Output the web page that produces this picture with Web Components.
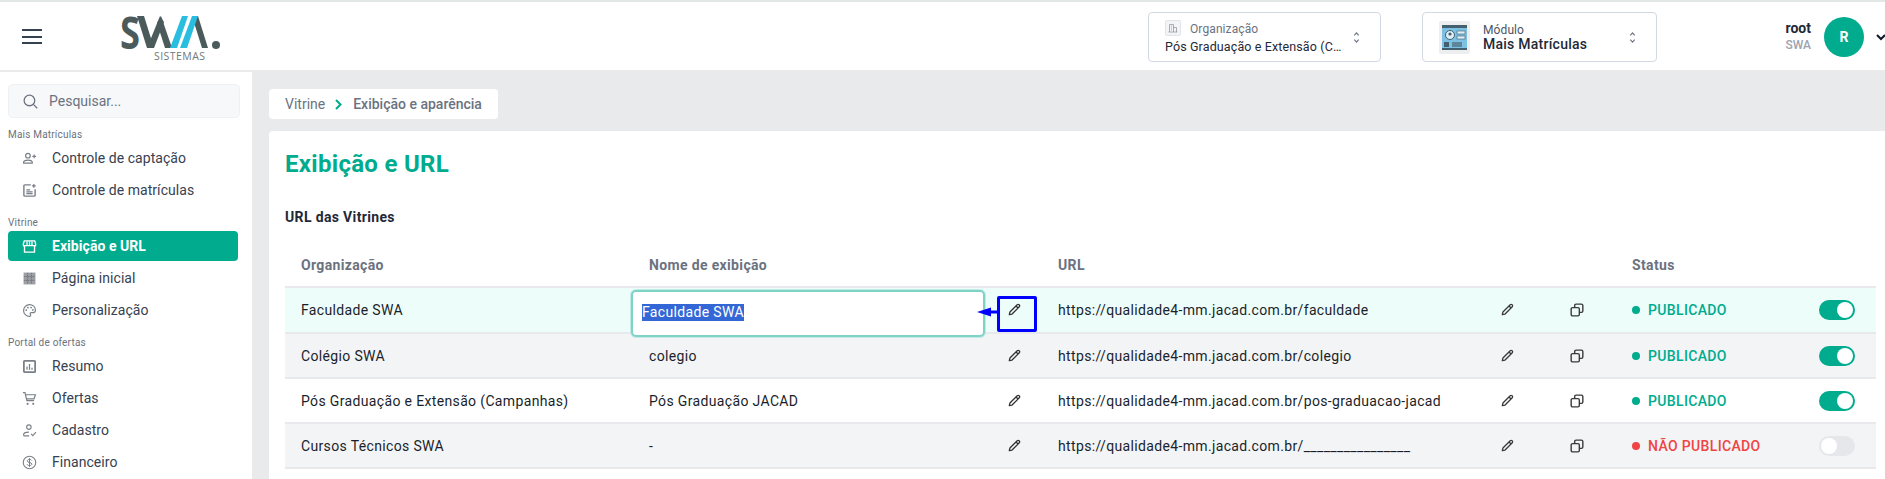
<!DOCTYPE html>
<html lang="pt-BR"><head><meta charset="utf-8"><title>Exibição e URL</title>
<style>
html,body{margin:0;padding:0;width:1885px;height:479px;overflow:hidden;background:#fff;font-family:Roboto,"Liberation Sans",sans-serif}
</style></head><body>
<swa-app></swa-app>
<script>
const ICONS={
 pencil:'<path d="M17 3.200a2.700 2.700 0 0 1 3.800 3.800L7.500 20.400 2.400 21.600l1.200-5.100Z" fill="none" stroke="currentColor" stroke-width="2.400" stroke-linejoin="round"/><path d="M14.800 5.400l3.800 3.800" stroke="currentColor" stroke-width="2.400"/>',
 copy:'<rect x="2" y="8" width="14" height="14" rx="2.400" fill="none" stroke="currentColor" stroke-width="2.400"/><path d="M8 8V4.400A2.400 2.400 0 0 1 10.400 2h9.200A2.400 2.400 0 0 1 22 4.400v9.200a2.400 2.400 0 0 1-2.400 2.400H16" fill="none" stroke="currentColor" stroke-width="2.400"/>',
 userplus:'<circle cx="9.500" cy="7.500" r="3.700" fill="none" stroke="currentColor" stroke-width="1.900"/><path d="M2.500 19.500v-1.300c0-2.500 4.200-3.700 7-3.700s7 1.200 7 3.700v1.300Z" fill="none" stroke="currentColor" stroke-width="1.900"/><path d="M19.500 5.500v6M16.500 8.500h6" stroke="currentColor" stroke-width="1.900"/>',
 note:'<path d="M14 3H4.500A1.500 1.500 0 0 0 3 4.500v15A1.500 1.500 0 0 0 4.500 21h15a1.500 1.500 0 0 0 1.500-1.500V10" fill="none" stroke="currentColor" stroke-width="2.300"/><path d="M7 11h6M7 14h10M7 17h10M19 1.500v6M16 4.500h6" stroke="currentColor" stroke-width="2"/>',
 store:'<path d="M3.500 3h17l1.500 6a3 3 0 0 1-2 2.700V21H4v-9.300A3 3 0 0 1 2 9Z" fill="none" stroke="currentColor" stroke-width="2.200" stroke-linejoin="round"/><path d="M8 3.500V10M12 3.500V10M16 3.500V10M3 10.500h18" stroke="currentColor" stroke-width="2"/>',
 grid:'<rect x="2.500" y="2.500" width="19" height="19" fill="currentColor" opacity=".75"/><path d="M9 3v18M15 3v18M3 9h18M3 15h18" stroke="#666" stroke-width="1.200" stroke-dasharray="2 1"/>',
 palette:'<path d="M12 2.500a9.500 9.500 0 1 0 0 19c1.500 0 2-1 2-1.800 0-1.200-1-1.500-1-2.700 0-1 .8-1.500 1.800-1.500H17c2.500 0 4.500-1.800 4.500-4.500 0-4.800-4.300-8.500-9.500-8.500Z" fill="none" stroke="currentColor" stroke-width="1.900"/><circle cx="6.800" cy="11.500" r="1.400" fill="currentColor"/><circle cx="9.500" cy="7.300" r="1.400" fill="currentColor"/><circle cx="14.500" cy="7.300" r="1.400" fill="currentColor"/><circle cx="17.300" cy="11" r="1.400" fill="currentColor"/>',
 chart:'<rect x="3" y="3" width="18" height="18" rx="1" fill="none" stroke="currentColor" stroke-width="2.800"/><path d="M8 17v-5M12 17V8M16 17v-3" stroke="currentColor" stroke-width="2"/>',
 cart:'<path d="M1.500 2.500h3.300l3 13h11.500" fill="none" stroke="currentColor" stroke-width="1.900"/><path d="M5.500 6h16l-2.300 6.500H7" fill="none" stroke="currentColor" stroke-width="1.900"/><circle cx="9" cy="20.500" r="1.700" fill="currentColor"/><circle cx="18" cy="20.500" r="1.700" fill="currentColor"/>',
 usercheck:'<circle cx="11" cy="6.500" r="3.600" fill="none" stroke="currentColor" stroke-width="1.800"/><path d="M2.500 20v-1.200c0-2.800 4.500-4.300 8.500-4.300M2.500 20.500h9" fill="none" stroke="currentColor" stroke-width="1.800"/><path d="M14.500 17.500l2.800 2.800 5-5.600" fill="none" stroke="currentColor" stroke-width="1.800"/>',
 dollar:'<circle cx="12" cy="12" r="10" fill="none" stroke="currentColor" stroke-width="1.800"/><path d="M15.500 8.800C15 7.500 13.800 7 12 7c-2 0-3.500 1-3.500 2.500 0 3.500 7.200 1.700 7.200 5 0 1.500-1.600 2.500-3.700 2.500s-3.400-.7-3.900-2.200M12 5v14" fill="none" stroke="currentColor" stroke-width="1.600"/>',
 search:'<circle cx="10.500" cy="10.500" r="7.500" fill="none" stroke="currentColor" stroke-width="1.800"/><path d="M16 16l5.500 5.500" stroke="currentColor" stroke-width="1.800"/>',
 updown:'<path d="M8.500 8.500l3.500-4 3.500 4M8.500 15.500l3.500 4 3.500-4" fill="none" stroke="currentColor" stroke-width="1.800"/>',
 building:'<path d="M5 20V5h8v15M13 11h6v9M3 20h18M8 8.500h2M8 12h2M8 15.500h2" fill="none" stroke="currentColor" stroke-width="1.500"/>'
};
const icon=(n,s=16)=>`<svg width="${s}" height="${s}" viewBox="0 0 24 24" aria-hidden="true" style="display:block;flex:none">${ICONS[n]}</svg>`;
const def=(name,css,html)=>{
  customElements.define(name,class extends HTMLElement{
    connectedCallback(){ if(this.shadowRoot) return;
      const r=this.attachShadow({mode:'open'});
      r.innerHTML=`<style>${css}</style>`+(typeof html==='function'?html(this):html);
    }
  });
};

def('swa-select',`
 :host{display:flex;align-items:center;box-sizing:border-box;height:50px;margin-top:2px;border:1px solid #d3d9e2;border-radius:4px;background:#fff;color:#1f2937}
 .chev{color:#6b7280;flex:none}
 .ico{width:16px;height:16px;border:1px solid #e1e4ea;background:#f3f4f6;border-radius:2px;box-sizing:border-box;color:#9096a0;display:flex;align-items:center;justify-content:center}
 .l{font-size:12px;line-height:14px;color:#6b7280;letter-spacing:.1px;position:relative;top:1px}
 .org{padding-left:16px;width:100%}
 .col{flex:1;min-width:0}
 .top{display:flex;align-items:center;gap:9px;height:17px}
 .v{font-size:12.500px;line-height:16px;margin-top:2px;letter-spacing:.12px;white-space:nowrap}
 .mod{padding-left:16px;width:100%;gap:13px}
 .m{font-size:14px;line-height:17px;font-weight:500;letter-spacing:.25px}
 .mod .l{color:#4b5563}
`,h=>h.getAttribute('kind')==='org'?`<div class="org" style="display:flex;align-items:center"><div class="col"><div class="top"><span class="ico">${icon('building',12)}</span><span class="l">Organização</span></div><div class="v">Pós Graduação e Extensão (C…</div></div><span class="chev" style="margin-right:16px">${icon('updown',15)}</span></div>`
:`<div class="org mod" style="display:flex;align-items:center"><svg width="31" height="33" viewBox="0 0 31 33" style="flex:none"><rect width="31" height="33" rx="2" fill="#eceef0"/><rect x="3" y="4" width="25" height="25" fill="#7cc0e4"/><rect x="3" y="4" width="25" height="3" fill="#44606f"/><circle cx="11" cy="14" r="4.500" fill="#dfeef6" stroke="#44606f"/><circle cx="11" cy="13" r="1.600" fill="#44606f"/><rect x="18" y="10" width="8" height="3" fill="#dfeef6" stroke="#44606f" stroke-width=".6"/><rect x="18" y="15" width="8" height="3" fill="#dfeef6" stroke="#44606f" stroke-width=".6"/><rect x="5" y="21" width="5" height="5" fill="#44606f"/><rect x="13" y="21" width="10" height="5" fill="#5f8598"/><rect x="3" y="27" width="25" height="2" fill="#44606f"/></svg><div class="col"><div class="l">Módulo</div><div class="m">Mais Matrículas</div></div><span class="chev" style="margin-right:16px">${icon('updown',15)}</span></div>`);

def('swa-logo',`:host{display:block;width:100px;height:68px}svg{display:block;overflow:visible}`,
`<svg width="100" height="68" viewBox="0 -14 100 68">
<text x="0" y="33" textLength="20" lengthAdjust="spacingAndGlyphs" font-family="'Open Sans',Lato,sans-serif" font-size="44" font-weight="700" fill="#4b5b5c">S</text>
<g fill="#4b5b5c">
<polygon points="17,0 24,0 34,32 27,32"/>
<polygon points="27,32 34,32 44,6 40,0"/>
<polygon points="37,7 41,0 52,32 45,32"/>
<polygon points="72,0 78,0 88,32 82,32"/>
<circle cx="96" cy="29" r="4"/>
</g>
<g fill="#29bde0">
<polygon points="50,32 57,32 68,0 62,0"/>
<polygon points="60,32 67,32 78,0 72,0"/>
</g>
<text x="34" y="44" font-family="'Open Sans',sans-serif" font-size="10.500" fill="#6e7a7b" textLength="51">SISTEMAS</text>
</svg>`);

def('swa-header',`
 :host{display:flex;align-items:center;box-sizing:border-box;height:72px;border-top:2px solid #e2e8e7;border-bottom:2px solid #e8eaeb;background:#fff}
 .burger{margin:1px 0 0 22px;width:20px;display:flex;flex-direction:column;gap:4.500px}
 .burger i{display:block;height:2px;background:#374151}
 swa-logo{margin-left:78px}
 .sel1{margin-left:928px;width:233px}
 .sel2{margin-left:41px;width:235px}
 .user{margin-left:auto;margin-top:2px;display:flex;align-items:center}
 .nm{text-align:right;margin-right:13px}
 .nm b{display:block;font-size:14px;line-height:16px;font-weight:700;color:#1f2937}
 .nm span{display:block;font-size:12px;line-height:18px;color:#9ca3af;font-weight:500}
 .av{width:40px;height:40px;border-radius:50%;background:#00ab8e;color:#fff;display:flex;align-items:center;justify-content:center;font-size:14px;font-weight:700}
 .car{width:21px;display:flex;justify-content:flex-end;color:#111827}
 .car svg{margin-right:-2px}
`,`<div class="burger"><i></i><i></i><i></i></div><swa-logo></swa-logo>
<swa-select class="sel1" kind="org"></swa-select><swa-select class="sel2" kind="mod"></swa-select>
<div class="user"><div class="nm"><b>root</b><span>SWA</span></div><div class="av">R</div><div class="car"><svg width="12" height="12" viewBox="0 0 12 12"><path d="M2 4l4 4 4-4" fill="none" stroke="currentColor" stroke-width="2"/></svg></div></div>`);

def('nav-item',`
 :host{display:flex;align-items:center;box-sizing:border-box;height:30px;margin:0 2px 2px 0;padding-left:14px;gap:16px;font-size:14px;letter-spacing:.05px;color:#374151;border-radius:4px}
 :host([active]){background:#00ab8e;color:#fff;font-weight:700}
 i{color:#7b8088;display:block;width:20px;font-style:normal;margin-right:-6px}
 :host([active]) i{color:#fff}
`,h=>`<i>${icon(h.getAttribute('icon'),15)}</i><slot></slot>`);

def('nav-group',`
 :host{display:block;margin-bottom:12px}
 .t{font-size:10px;line-height:12px;height:12px;color:#6b7280;letter-spacing:.2px;margin-bottom:2px}
`,h=>`<div class="t">${h.getAttribute('label')}</div><slot></slot>`);

def('swa-side',`
 :host{display:block;box-sizing:border-box;width:252px;flex:none;background:#fff;padding:12px 12px 0 8px;overflow:hidden}
 .s{display:flex;align-items:center;box-sizing:border-box;height:34px;width:232px;border:1px solid #eef0f3;border-radius:5px;background:#f7f8fa;padding-left:13px;gap:10px;color:#6b7280;font-size:14px;letter-spacing:0;margin-bottom:11px}
`,`<div class="s">${icon('search',17)}<span>Pesquisar...</span></div>
<nav-group label="Mais Matrículas"><nav-item icon="userplus">Controle de captação</nav-item><nav-item icon="note">Controle de matrículas</nav-item></nav-group>
<nav-group label="Vitrine"><nav-item icon="store" active>Exibição e URL</nav-item><nav-item icon="grid">Página inicial</nav-item><nav-item icon="palette">Personalização</nav-item></nav-group>
<nav-group label="Portal de ofertas"><nav-item icon="chart">Resumo</nav-item><nav-item icon="cart">Ofertas</nav-item><nav-item icon="usercheck">Cadastro</nav-item><nav-item icon="dollar">Financeiro</nav-item></nav-group>`);

def('swa-crumb',`
 :host{display:inline-flex;align-items:center;box-sizing:border-box;height:30px;width:229px;padding-left:16px;background:#fff;border-radius:4px;font-size:14px;letter-spacing:0;color:#6b7280}
 b{font-weight:500;color:#6b7280}
 svg{margin:0 10px 0 9px}
`,`<span>Vitrine</span><svg width="9" height="11" viewBox="0 0 9 11"><path d="M2 1l4.500 4.500L2 10" fill="none" stroke="#00ab8e" stroke-width="2"/></svg><b>Exibição e aparência</b>`);

const COLS='348px 351px 74px 420px 58px 82px 190px 68px';
def('status-badge',`
 :host{display:flex;align-items:center;padding-left:14px;font-size:14px;font-weight:500;letter-spacing:.35px;color:#00ab8e;white-space:nowrap}
 :host([off]){color:#ef4444}
 i{width:8px;height:8px;border-radius:50%;background:currentColor;margin-right:8px;flex:none}
`,`<i></i><slot></slot>`);
def('swa-toggle',`
 :host{display:block;box-sizing:border-box;width:36px;height:20px;border-radius:10px;background:#00ab8e;position:relative;margin-left:11px}
 :host([off]){background:#e5e7eb}
 i{position:absolute;top:2px;right:2px;width:16px;height:16px;border-radius:50%;background:#fff}
 :host([off]) i{right:auto;left:2px}
`,`<i></i>`);
def('url-row',`
 :host{display:grid;grid-template-columns:${COLS};box-sizing:border-box;height:45px;align-items:center;font-size:14px;letter-spacing:.35px;color:#1a1f2b;border-bottom:2px solid #e7e9ed;position:relative}
 :host([tint="mint"]){background:#edfdfa;height:46px;padding-bottom:1px}
 :host([tint="gray"]){background:#f3f4f6}
 .p,.n{padding-left:16px;white-space:nowrap}
 .e{display:flex;justify-content:center;padding-right:14px;color:#333}
 .ic{display:flex;justify-content:center;color:#3a3a3a}
 .u{white-space:nowrap}
 .inp{box-sizing:border-box;width:354px;height:47px;margin:2px 0 -6px -2px;border:2px solid #7fd3c6;border-radius:5px;background:#fff;padding:12px 9px 0;display:flex;align-items:flex-start;position:relative;z-index:1;box-shadow:0 0 0 1px #c4ebe5}
 .inp span{background:#3367d6;color:#fff;line-height:17px}
 .ann{position:absolute;left:712px;top:8px;width:40px;height:36px;box-sizing:border-box;border:3.500px solid #0000ff;border-radius:2px;z-index:2}
 .arr{position:absolute;left:692px;top:19px;z-index:2;display:block}
`,h=>{const a=n=>h.getAttribute(n)||'';const ed=h.hasAttribute('editing');
 const off=h.hasAttribute('off')?' off':'';
 return `<div class="p">${a('org')}</div>`+
 (ed?`<div style="align-self:start"><div class="inp"><span>${a('name')}</span></div></div>`:`<div class="n">${a('name')}</div>`)+
 `<div class="e">${icon('pencil',13)}</div><div class="u">${a('url')}</div><div class="ic">${icon('pencil',13)}</div><div class="ic">${icon('copy',14)}</div><status-badge${off}>${a('st')}</status-badge><swa-toggle${off}></swa-toggle>`+
 (ed?`<div class="ann"></div><svg class="arr" width="20" height="10" viewBox="0 0 20 10"><path d="M0 5L14 .5V3.500h6v3h-6v3Z" fill="#0000ff"/></svg>`:'');
});
def('url-table',`
 :host{display:block;width:1591px}
 .h{display:grid;grid-template-columns:${COLS};height:48px;padding-top:4px;align-items:center;font-size:14px;font-weight:700;letter-spacing:.35px;color:#6b7280;border-bottom:2px solid #e7e9ed;box-sizing:border-box}
 .h span:first-child,.h .n{padding-left:16px}
 .s{padding-left:14px}
`,`<div class="h"><span>Organização</span><span class="n">Nome de exibição</span><span></span><span>URL</span><span></span><span></span><span class="s">Status</span><span></span></div><slot></slot>`);

def('swa-main',`
 :host{display:block;flex:1;background:#e9eaeb;padding:17px 0 0 17px;overflow:hidden;min-width:0}
 .card{background:#fff;border-radius:4px 0 0 0;margin-top:12px;padding:15px 0 0 16px;height:400px;box-sizing:border-box}
 h1{margin:0;font-size:24px;line-height:36px;font-weight:700;color:#00ab8e;letter-spacing:.3px}
 h2{margin:26px 0 0;font-size:14px;line-height:18px;font-weight:700;color:#1f2937;letter-spacing:.35px}
 url-table{margin-top:14px}
`,`<swa-crumb></swa-crumb><div class="card"><h1>Exibição e URL</h1><h2>URL das Vitrines</h2>
<url-table>
<url-row tint="mint" editing org="Faculdade SWA" name="Faculdade SWA" url="https://qualidade4-mm.jacad.com.br/faculdade" st="PUBLICADO"></url-row>
<url-row tint="gray" org="Colégio SWA" name="colegio" url="https://qualidade4-mm.jacad.com.br/colegio" st="PUBLICADO"></url-row>
<url-row org="Pós Graduação e Extensão (Campanhas)" name="Pós Graduação JACAD" url="https://qualidade4-mm.jacad.com.br/pos-graduacao-jacad" st="PUBLICADO"></url-row>
<url-row tint="gray" off org="Cursos Técnicos SWA" name="-" url="https://qualidade4-mm.jacad.com.br/________________" st="NÃO PUBLICADO"></url-row>
</url-table></div>`);

def('swa-app',`
 :host{display:flex;flex-direction:column;width:1885px;height:479px;overflow:hidden}
 .b{display:flex;flex:1;min-height:0}
`,`<swa-header></swa-header><div class="b"><swa-side></swa-side><swa-main></swa-main></div>`);
</script>
</body></html>
